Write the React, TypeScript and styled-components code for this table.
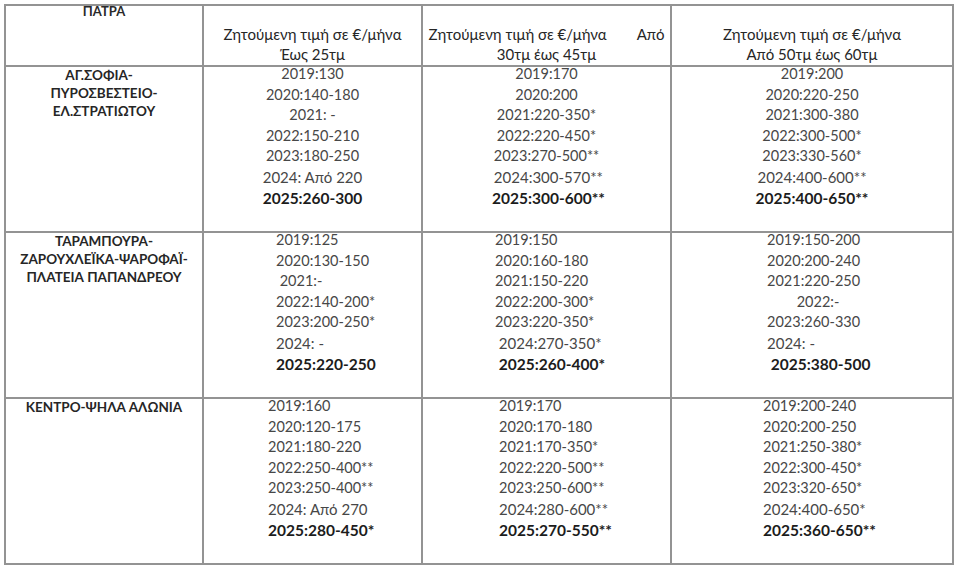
import styled, { createGlobalStyle } from "styled-components";

const GlobalStyle = createGlobalStyle`
  html, body {
    margin: 0;
    padding: 0;
    background: #ffffff;
  }
`;

type CellData = {
  pad?: number;
  lines: string[];
};

type RowData = {
  area: string[];
  cells: CellData[];
};

const rows: RowData[] = [
  {
    area: ["ΑΓ.ΣΟΦΙΑ-   ", "ΠΥΡΟΣΒΕΣΤΕΙΟ-", "ΕΛ.ΣΤΡΑΤΙΩΤΟΥ"],
    cells: [
      {
        lines: [
          "2019:130",
          "2020:140-180",
          "2021: -",
          "2022:150-210",
          "2023:180-250",
          "2024: Από 220",
          "2025:260-300",
        ],
      },
      {
        lines: [
          "2019:170",
          "2020:200",
          "2021:220-350*",
          "2022:220-450*",
          "2023:270-500**",
          " 2024:300-570**",
          " 2025:300-600**",
        ],
      },
      {
        lines: [
          "2019:200",
          "2020:220-250",
          "2021:300-380",
          "2022:300-500*",
          "2023:330-560*",
          "2024:400-600**",
          "2025:400-650**",
        ],
      },
    ],
  },
  {
    area: ["ΤΑΡΑΜΠΟΥΡΑ-", "ΖΑΡΟΥΧΛΕΪΚΑ-ΨΑΡΟΦΑΪ-", "ΠΛΑΤΕΙΑ ΠΑΠΑΝΔΡΕΟΥ"],
    cells: [
      {
        pad: 72,
        lines: [
          "2019:125",
          "2020:130-150",
          " 2021:-",
          "2022:140-200*",
          "2023:200-250*",
          "2024: -",
          "2025:220-250",
        ],
      },
      {
        pad: 72,
        lines: [
          "2019:150",
          "2020:160-180",
          "2021:150-220",
          "2022:200-300*",
          "2023:220-350*",
          " 2024:270-350*",
          " 2025:260-400*",
        ],
      },
      {
        pad: 95,
        lines: [
          "2019:150-200",
          "2020:200-240",
          "2021:220-250",
          "        2022:-",
          "2023:260-330",
          "2024: -",
          " 2025:380-500",
        ],
      },
    ],
  },
  {
    area: ["ΚΕΝΤΡΟ-ΨΗΛΑ ΑΛΩΝΙΑ"],
    cells: [
      {
        pad: 64,
        lines: [
          "2019:160",
          "2020:120-175",
          "2021:180-220",
          "2022:250-400**",
          "2023:250-400**",
          "2024: Από 270",
          "2025:280-450*",
        ],
      },
      {
        pad: 76,
        lines: [
          "2019:170",
          "2020:170-180",
          "2021:170-350*",
          "2022:220-500**",
          "2023:250-600**",
          "2024:280-600**",
          "2025:270-550**",
        ],
      },
      {
        pad: 91,
        lines: [
          "2019:200-240",
          "2020:200-250",
          "2021:250-380*",
          "2022:300-450*",
          "2023:320-650*",
          "2024:400-650*",
          "2025:360-650**",
        ],
      },
    ],
  },
];

const Page = styled.div`
  padding: 4px 0 0 4px;
`;

const Table = styled.table`
  border-collapse: collapse;
  table-layout: fixed;
  width: 948px;
  font-family: Lato, "Liberation Sans", sans-serif;
`;

const HeadRow = styled.tr`
  height: 61px;
`;

const BodyRow = styled.tr`
  height: 166px;
`;

const Cell = styled.td<{ $pad?: number; $valign?: "top" | "bottom" }>`
  border: 2px solid #939393;
  padding: 0 0 0 ${(p) => p.$pad ?? 0}px;
  vertical-align: ${(p) => p.$valign ?? "top"};
  text-align: ${(p) => (p.$pad ? "left" : "center")};
`;

const City = styled.div`
  margin-top: -3px;
  font-size: 13px;
  font-weight: 700;
  line-height: 16px;
  color: #2a2a2a;
`;

const HeadText = styled.div`
  padding-bottom: 1px;
  font-size: 15px;
  line-height: 20px;
  color: #262626;
  white-space: pre;
`;

const Tail = styled.span`
  margin-left: 30px;
`;

const AreaName = styled.div`
  margin-top: -2px;
  font-size: 13.5px;
  font-weight: 700;
  line-height: 20px;
  color: #262626;
  white-space: pre;
`;

const Values = styled.div`
  margin-top: -3px;
`;

const Line = styled.div<{ $big?: boolean; $bold?: boolean }>`
  white-space: pre;
  font-size: ${(p) => (p.$bold ? "15.5px" : p.$big ? "15px" : "14.5px")};
  font-weight: ${(p) => (p.$bold ? 700 : 400)};
  line-height: ${(p) => (p.$big || p.$bold ? "21.5px" : "20.5px")};
  color: ${(p) => (p.$bold ? "#1c1c1c" : "#474747")};
`;

const ValueCell = ({ cell }: { cell: CellData }) => (
  <Cell $pad={cell.pad}>
    <Values>
      {cell.lines.map((line) => {
        const year = line.trim().slice(0, 4);
        return (
          <Line key={line} $big={year === "2024"} $bold={year === "2025"}>
            {line}
          </Line>
        );
      })}
    </Values>
  </Cell>
);

export default function App() {
  return (
    <Page>
      <GlobalStyle />
      <Table>
        <colgroup>
          <col style={{ width: 198 }} />
          <col style={{ width: 219 }} />
          <col style={{ width: 249 }} />
          <col style={{ width: 282 }} />
        </colgroup>
        <tbody>
          <HeadRow>
            <Cell>
              <City>ΠΑΤΡΑ</City>
            </Cell>
            <Cell $valign="bottom">
              <HeadText>
                Ζητούμενη τιμή σε €/μήνα
                <br />
                Έως 25τμ
              </HeadText>
            </Cell>
            <Cell $valign="bottom">
              <HeadText>
                Ζητούμενη τιμή σε €/μήνα<Tail>Από</Tail>
                <br />
                30τμ έως 45τμ
              </HeadText>
            </Cell>
            <Cell $valign="bottom">
              <HeadText>
                Ζητούμενη τιμή σε €/μήνα
                <br />
                Από 50τμ έως 60τμ
              </HeadText>
            </Cell>
          </HeadRow>
          {rows.map((row) => (
            <BodyRow key={row.area.join("")}>
              <Cell>
                {row.area.map((name) => (
                  <AreaName key={name}>{name}</AreaName>
                ))}
              </Cell>
              {row.cells.map((cell, i) => (
                <ValueCell key={i} cell={cell} />
              ))}
            </BodyRow>
          ))}
        </tbody>
      </Table>
    </Page>
  );
}
